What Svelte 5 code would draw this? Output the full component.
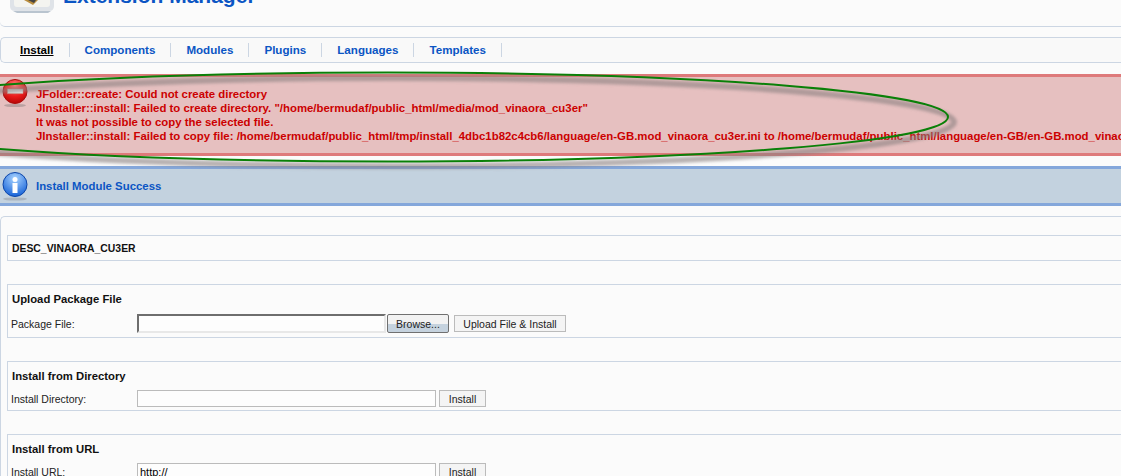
<script>
  const errors = [
    'JFolder::create: Could not create directory',
    'JInstaller::install: Failed to create directory. "/home/bermudaf/public_html/media/mod_vinaora_cu3er"',
    'It was not possible to copy the selected file.',
    'JInstaller::install: Failed to copy file: /home/bermudaf/public_html/tmp/install_4dbc1b82c4cb6/language/en-GB.mod_vinaora_cu3er.ini to /home/bermudaf/public_html/language/en-GB/en-GB.mod_vinaora_cu3er.ini'
  ];
  const tabs = ['Install', 'Components', 'Modules', 'Plugins', 'Languages', 'Templates'];
</script>

<div class="page">
  <header class="head">
    <svg class="logo" width="44" height="14" viewBox="0 0 44 14">
      <path d="M0 0h44v6q0 5-5 5H5q-5 0-5-5z" fill="#dfe3e8" />
      <path d="M4 0h36v4q0 3-3 3H7q-3 0-3-3z" fill="#f4f4f0" />
      <path d="M14 0l9 5 5-5z" fill="#b98d3e" />
      <path d="M18 0l6 3 2-3z" fill="#444" />
      <path d="M3 11h38l-3 2H7z" fill="#b9c4cf" />
    </svg>
    <h1>Extension Manager</h1>
  </header>

  <nav class="tabs">
    {#each tabs as tab, i}
      <a href="#top" class:on={i === 0}>{tab}</a>
    {/each}
  </nav>

  <section class="msg err">
    <svg class="ico" width="28" height="30" viewBox="0 0 28 30">
      <defs>
        <radialGradient id="r" cx="50%" cy="25%" r="75%">
          <stop offset="0" stop-color="#ff7a7a" />
          <stop offset="0.6" stop-color="#ec1c1c" />
          <stop offset="1" stop-color="#b80606" />
        </radialGradient>
      </defs>
      <ellipse cx="14" cy="27.5" rx="11" ry="1.6" fill="#b9a0a0" />
      <circle cx="14" cy="13.5" r="12" fill="url(#r)" stroke="#a80c0c" />
      <rect x="6.5" y="11" width="15.5" height="4.5" fill="#eee" stroke="#c98" stroke-width="0.5" />
    </svg>
    <ul>
      {#each errors as line}
        <li>{line}</li>
      {/each}
    </ul>
  </section>

  <section class="msg info">
    <svg class="ico" width="28" height="30" viewBox="0 0 28 30">
      <defs>
        <radialGradient id="b" cx="50%" cy="25%" r="75%">
          <stop offset="0" stop-color="#a9d4ff" />
          <stop offset="1" stop-color="#1763d8" />
        </radialGradient>
      </defs>
      <ellipse cx="14" cy="27" rx="12" ry="1.6" fill="#a9b4bf" />
      <circle cx="14" cy="12.5" r="12" fill="url(#b)" stroke="#0c45a8" />
      <circle cx="14" cy="7.5" r="2.5" fill="#fff" />
      <rect x="11.5" y="11" width="5" height="10" fill="#fff" />
    </svg>
    <p>Install Module Success</p>
  </section>

  <main class="content">
    <div class="box desc"><strong>DESC_VINAORA_CU3ER</strong></div>

    <div class="box form upload">
      <h3>Upload Package File</h3>
      <div class="row">
        <label for="pkg">Package File:</label>
        <input id="pkg" class="file" />
        <button class="browse">Browse...</button>
        <button class="send">Upload File &amp; Install</button>
      </div>
    </div>

    <div class="box form">
      <h3>Install from Directory</h3>
      <div class="row">
        <label for="dir">Install Directory:</label>
        <input id="dir" />
        <button>Install</button>
      </div>
    </div>

    <div class="box form">
      <h3>Install from URL</h3>
      <div class="row">
        <label for="url">Install URL:</label>
        <input id="url" value="http://" />
        <button>Install</button>
      </div>
    </div>
  </main>

  <svg class="scribble" width="1121" height="476" viewBox="0 0 1121 476">
    <defs>
      <filter id="soft"><feGaussianBlur stdDeviation="1.5" /></filter>
    </defs>
    <ellipse cx="394" cy="122" rx="560" ry="44" fill="none" stroke="#8a8080" stroke-opacity="0.6" stroke-width="6" filter="url(#soft)" />
    <ellipse cx="388" cy="117" rx="560" ry="44.5" fill="none" stroke="#0a8008" stroke-width="2" />
  </svg>
</div>

<style>
  :global(body) {
    margin: 0;
    background: #fbfbfb;
  }
  .page {
    position: relative;
    width: 1121px;
    height: 476px;
    overflow: hidden;
    font-family: "Liberation Sans", Arial, sans-serif;
    font-size: 11.4px;
    color: #222;
    background: #fbfbfb;
  }
  .head {
    height: 26px;
    border-bottom: 1px solid #ccd6e3;
    border-radius: 0 0 0 5px;
    display: flex;
    overflow: hidden;
    padding-left: 10px;
  }
  .logo {
    flex: none;
  }
  h1 {
    margin: -17px 0 0 9px;
    font-size: 21px;
    line-height: 26px;
    color: #0b55c4;
    white-space: nowrap;
  }
  .tabs {
    margin-top: 10px;
    height: 24px;
    border: 1px solid #ccd6e3;
    border-right: 0;
    border-radius: 5px 0 0 5px;
    background: #f9f9f9;
    display: flex;
    align-items: center;
    padding-left: 19px;
  }
  .tabs a {
    font-size: 11.6px;
    font-weight: bold;
    color: #0b55c4;
    text-decoration: none;
    padding-right: 15px;
    margin-right: 15px;
    border-right: 1px solid #ccd6e3;
    line-height: 14px;
  }
  .tabs a.on {
    color: #000;
    text-decoration: underline;
  }
  .msg {
    display: flex;
    border-style: solid;
    border-width: 3px 0;
    font-weight: bold;
  }
  .err {
    margin-top: 11px;
    height: 76px;
    background: #e6c0c0;
    border-color: #de7a7b;
    color: #c00;
  }
  .info {
    margin-top: 10px;
    height: 34px;
    background: #c3d2df;
    border-color: #84a7db;
    color: #0b55c4;
    align-items: center;
  }
  .ico {
    flex: none;
    width: 28px;
    margin-left: 1px;
  }
  .err .ico {
    margin-top: 1px;
  }
  .info .ico {
    margin-top: 2px;
  }
  ul {
    list-style: none;
    margin: 0;
    padding: 10px 0 0 7px;
    white-space: nowrap;
  }
  li {
    line-height: 14px;
  }
  .info p {
    margin: 0 0 0 7px;
  }
  .content {
    margin-top: 10px;
    border-top: 1px solid #ccd6e3;
    border-left: 1px solid #ccd6e3;
    border-radius: 5px 0 0 0;
    padding: 18px 0 0 6px;
    display: flex;
    flex-direction: column;
    gap: 23px;
  }
  .box {
    border: 1px solid #ccd6e3;
    border-right: 0;
    padding-left: 4px;
  }
  .desc {
    height: 24px;
    font-size: 10.4px;
    line-height: 26px;
    color: #111;
  }
  .form {
    height: 48px;
  }
  .upload {
    height: 52px;
  }
  .form:last-child {
    height: 70px;
  }
  h3 {
    margin: 0;
    padding-top: 7px;
    font-size: 11.3px;
    line-height: 14px;
    color: #111;
  }
  .row {
    display: flex;
    align-items: center;
    margin-top: 7px;
  }
  .upload .row {
    margin-top: 8px;
  }
  label {
    width: 126px;
    flex: none;
    margin-left: -1px;
    font-size: 10.5px;
    font-weight: normal;
    color: #222;
  }
  input {
    width: 299px;
    height: 17px;
    padding: 0 2px;
    box-sizing: border-box;
    border: 1px solid #bbb;
    background: #fdfdfd;
    font: 11px "Liberation Sans", Arial, sans-serif;
  }
  .file {
    width: 249px;
    height: 19px;
    border: 2px solid #e8e8e8;
    border-top-color: #6e6e6e;
    border-left-color: #6e6e6e;
  }
  button {
    box-sizing: border-box;
    width: 47px;
    height: 17px;
    margin-left: 3px;
    padding: 0;
    border: 1px solid #bbb;
    background: #f4f4f4;
    font: 10.5px "Liberation Sans", Arial, sans-serif;
    color: #222;
  }
  .browse {
    width: 62px;
    height: 19px;
    margin-left: 1px;
    border: 1px solid #707070;
    border-radius: 2px;
    background: linear-gradient(#f2f2f2 50%, #c5d2de 50%);
  }
  .send {
    width: 112px;
    margin-left: 5px;
  }
  .scribble {
    position: absolute;
    left: 0;
    top: 0;
    pointer-events: none;
  }
</style>
